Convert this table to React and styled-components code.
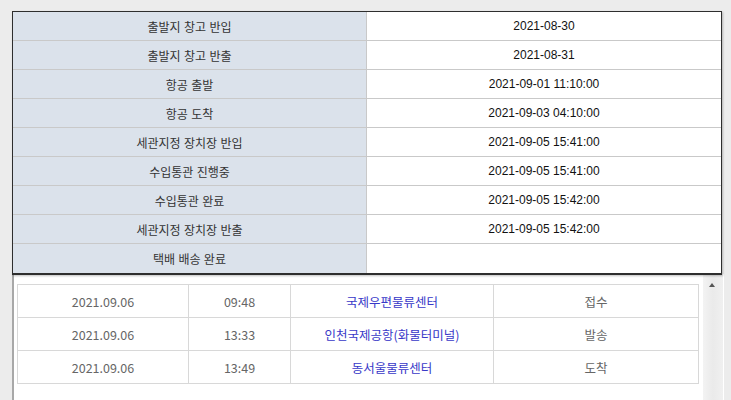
import React from 'react';
import styled, { createGlobalStyle } from 'styled-components';

const steps = [
  ['출발지 창고 반입', '2021-08-30'],
  ['출발지 창고 반출', '2021-08-31'],
  ['항공 출발', '2021-09-01 11:10:00'],
  ['항공 도착', '2021-09-03 04:10:00'],
  ['세관지정 장치장 반입', '2021-09-05 15:41:00'],
  ['수입통관 진행중', '2021-09-05 15:41:00'],
  ['수입통관 완료', '2021-09-05 15:42:00'],
  ['세관지정 장치장 반출', '2021-09-05 15:42:00'],
  ['택배 배송 완료', ''],
];

const tracking = [
  ['2021.09.06', '09:48', '국제우편물류센터', '접수'],
  ['2021.09.06', '13:33', '인천국제공항(화물터미널)', '발송'],
  ['2021.09.06', '13:49', '동서울물류센터', '도착'],
];

const GlobalStyle = createGlobalStyle`
  body {
    margin: 0;
    background: #ececec;
    font-family: "Liberation Sans", "Noto Sans CJK KR", sans-serif;
  }
`;

const Page = styled.div`
  width: 731px;
  height: 400px;
  overflow: hidden;
  padding: 11px 0 0 12px;
  box-sizing: border-box;
`;

// popup with the customs steps
const Popup = styled.div`
  position: relative;
  z-index: 2;
  width: 710px;
  box-sizing: border-box;
  background: #fff;
  border: 1px solid #2e2e2e;
  border-bottom-width: 2px;
  box-shadow: 1px 1px 2px rgba(0, 0, 0, 0.25);
`;

const StepRow = styled.div`
  display: grid;
  grid-template-columns: 354px 1fr;
  height: 29px;
  border-bottom: ${p => (p.$last ? 'none' : '1px solid #c9c9c9')};
  box-sizing: border-box;
`;

const Cell = styled.div`
  display: flex;
  align-items: center;
  justify-content: center;
  font-size: 12px;
  color: ${p => (p.$label ? '#333' : '#111')};
  background: ${p => (p.$label ? '#dbe2eb' : '#fff')};
  border-right: ${p => (p.$label ? '1px solid #c9c9c9' : 'none')};
`;

//panel behind the popup
const Panel = styled.div`
  display: flex;
  width: 709px;
  height: 130px;
  margin-top: -1px;
  border-left: 2px solid #a8a8a8;
  border-right: 1px solid #fff;
  background: #fff;
`;

const ListArea = styled.div`
  flex: 1;
  padding: 10px 0 0 3px;
`;

const TrackTable = styled.div`
  width: 680px;
  border: 1px solid #d8d8d8;
  border-bottom: none;
`;

const TrackRow = styled.div`
  display: grid;
  grid-template-columns: 170px 102px 203px 1fr;
  height: 33px;
  border-bottom: 1px solid #d8d8d8;
  box-sizing: border-box;
`;

const TrackCell = styled.div`
  display: flex;
  align-items: center;
  justify-content: center;
  font-family: "Noto Sans CJK KR", sans-serif;
  font-size: 12.5px;
  color: ${p => (p.$link ? '#3838c8' : '#666')};
  border-left: ${p => (p.$first ? 'none' : '1px solid #d8d8d8')};
`;

const Scrollbar = styled.div`
  width: 20px;
  margin-left: 1px;
  background: linear-gradient(90deg, #f3f3f3, #eaeaea 50%, #f0f0f0);
  display: flex;
  justify-content: center;
  padding: 9px 2px 0 0;
  box-sizing: border-box;
`;

const UpArrow = styled.div`
  width: 0;
  height: 0;
  border-left: 3.5px solid transparent;
  border-right: 3.5px solid transparent;
  border-bottom: 4px solid #555;
`;

export default function App() {
  return (
    <>
      <GlobalStyle />
      <Page>
        <Popup>
          {steps.map(([label, date], i) => (
            <StepRow key={label} $last={i === steps.length - 1}>
              <Cell $label>{label}</Cell>
              <Cell>{date}</Cell>
            </StepRow>
          ))}
        </Popup>
        <Panel>
          <ListArea>
            <TrackTable>
              {tracking.map(([day, time, place, status]) => (
                <TrackRow key={time}>
                  <TrackCell $first>{day}</TrackCell>
                  <TrackCell>{time}</TrackCell>
                  <TrackCell $link>{place}</TrackCell>
                  <TrackCell>{status}</TrackCell>
                </TrackRow>
              ))}
            </TrackTable>
          </ListArea>
          <Scrollbar>
            <UpArrow />
          </Scrollbar>
        </Panel>
      </Page>
    </>
  );
}
